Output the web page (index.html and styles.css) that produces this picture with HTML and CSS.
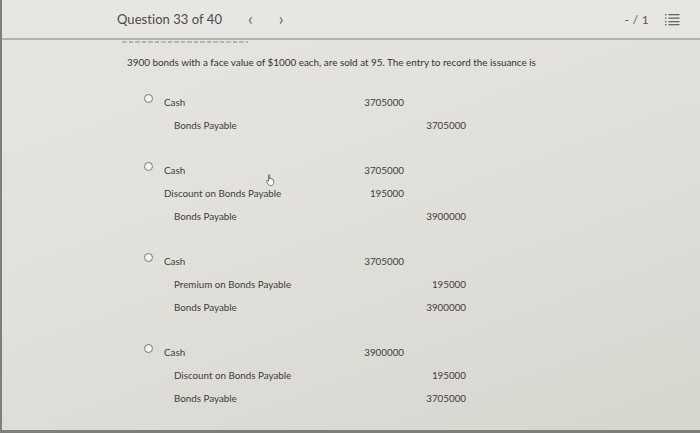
FILE: index.html
```html
<!DOCTYPE html>
<html>
<head>
<meta charset="utf-8">
<link rel="stylesheet" href="styles.css">
</head>
<body>
<div class="frame">
  <header class="topbar">
    <div class="qnav">
      <span class="qtitle">Question 33 of 40</span>
      <span class="arrow">&lsaquo;</span>
      <span class="arrow">&rsaquo;</span>
    </div>
    <div class="tools">
      <span class="score">- / 1</span>
      <svg class="listicon" width="15" height="13" viewBox="0 0 15 13">
        <g fill="#666">
          <rect x="0" y="1" width="1.4" height="1.4"/>
          <rect x="0" y="4.5" width="1.4" height="1.4"/>
          <rect x="0" y="8" width="1.4" height="1.4"/>
          <rect x="0" y="11" width="1.4" height="1.4"/>
          <rect x="3.5" y="1" width="11" height="1.3"/>
          <rect x="3.5" y="4.5" width="11" height="1.3"/>
          <rect x="3.5" y="8" width="11" height="1.3"/>
          <rect x="3.5" y="11" width="11" height="1.3"/>
        </g>
      </svg>
    </div>
  </header>
  <div class="scrollcut"></div>
  <main class="content">
    <p class="question">3900 bonds with a face value of $1000 each, are sold at 95. The entry to record the issuance is</p>

    <div class="option">
      <span class="radio"></span>
      <div class="entries">
        <div class="row"><span class="acct">Cash</span><span class="dr">3705000</span><span class="cr"></span></div>
        <div class="row"><span class="acct indent">Bonds Payable</span><span class="dr"></span><span class="cr">3705000</span></div>
      </div>
    </div>

    <div class="option">
      <span class="radio"></span>
      <div class="entries">
        <div class="row"><span class="acct">Cash</span><span class="dr">3705000</span><span class="cr"></span></div>
        <div class="row"><span class="acct">Discount on Bonds Payable</span><span class="dr">195000</span><span class="cr"></span></div>
        <div class="row"><span class="acct indent">Bonds Payable</span><span class="dr"></span><span class="cr">3900000</span></div>
      </div>
      <svg class="cursor" width="11" height="12" viewBox="0 0 11 12">
        <path d="M3.5 1.2c0-.7 1.2-.7 1.2 0v4l.3-.8c.3-.6 1.2-.5 1.2.2l.1.6c.2-.6 1.1-.5 1.2.1l.1.6c.3-.5 1.1-.3 1.1.3v2.5c0 1.6-1.2 2.8-2.8 2.8H5.2c-.9 0-1.6-.5-2-1.2L1.4 7.2c-.4-.6.3-1.3.9-.9l1.2 1z" fill="#fff" stroke="#555" stroke-width="0.8"/>
      </svg>
    </div>

    <div class="option">
      <span class="radio"></span>
      <div class="entries">
        <div class="row"><span class="acct">Cash</span><span class="dr">3705000</span><span class="cr"></span></div>
        <div class="row"><span class="acct indent">Premium on Bonds Payable</span><span class="dr"></span><span class="cr">195000</span></div>
        <div class="row"><span class="acct indent">Bonds Payable</span><span class="dr"></span><span class="cr">3900000</span></div>
      </div>
    </div>

    <div class="option">
      <span class="radio"></span>
      <div class="entries">
        <div class="row"><span class="acct">Cash</span><span class="dr">3900000</span><span class="cr"></span></div>
        <div class="row"><span class="acct indent">Discount on Bonds Payable</span><span class="dr"></span><span class="cr">195000</span></div>
        <div class="row"><span class="acct indent">Bonds Payable</span><span class="dr"></span><span class="cr">3705000</span></div>
      </div>
    </div>
  </main>
</div>
</body>
</html>
```

FILE: styles.css
```css
html, body {
  margin: 0;
  padding: 0;
  width: 700px;
  height: 433px;
  overflow: hidden;
  background: #7f7e79;
}

.frame {
  box-sizing: border-box;
  width: 698px;
  height: 430px;
  margin-left: 2px;
  background: linear-gradient(160deg, #e6e5e1 0%, #e1e0db 45%, #d6d5ce 100%);
  font-family: Lato, "Open Sans", sans-serif;
  color: #3f3f3d;
  display: flex;
  flex-direction: column;
  overflow: hidden;
}

.topbar {
  height: 38px;
  flex: none;
  display: flex;
  align-items: center;
  justify-content: space-between;
  padding: 0 20px 0 115px;
  background: #e7e6e2;
  border-bottom: 2px solid #b3b2ad;
}

.qnav {
  display: flex;
  align-items: center;
}

.qtitle {
  font-size: 13px;
  color: #4b4b49;
  letter-spacing: 0.05px;
}

.arrow {
  font-size: 17px;
  color: #666;
  margin-left: 26px;
  line-height: 1;
  padding-bottom: 2px;
}

.tools {
  display: flex;
  align-items: center;
  gap: 16px;
}

.score {
  font-size: 12px;
  color: #555;
  letter-spacing: 0.3px;
}

.listicon {
  display: block;
}

.scrollcut {
  height: 2px;
  margin: 1px 0 0 120px;
  width: 126px;
  background: repeating-linear-gradient(90deg, #a6a5a0 0 5px, transparent 5px 7px, #9c9b96 7px 11px, transparent 11px 13px);
  opacity: 0.7;
  flex: none;
}

.content {
  padding: 0 0 0 125px;
  flex: 1;
}

.question {
  margin: 13px 0 26px 0;
  font-size: 9.9px;
  color: #333;
}

.option {
  position: relative;
  display: flex;
  align-items: flex-start;
  margin: 0 0 20px 17px;
}

.radio {
  flex: none;
  box-sizing: border-box;
  width: 9px;
  height: 9px;
  border: 1px solid #777;
  border-radius: 50%;
  background: #f3f3f0;
}

.entries {
  margin-left: 11px;
  margin-top: 2px;
  display: flex;
  flex-direction: column;
}

.row {
  display: grid;
  grid-template-columns: 188px 52px 62px;
  height: 23px;
  align-items: start;
  font-size: 9.8px;
  color: #3d3d3b;
}

.acct.indent {
  padding-left: 10px;
}

.dr, .cr {
  text-align: right;
}

.cursor {
  position: absolute;
  left: 121px;
  top: 12px;
}
```
